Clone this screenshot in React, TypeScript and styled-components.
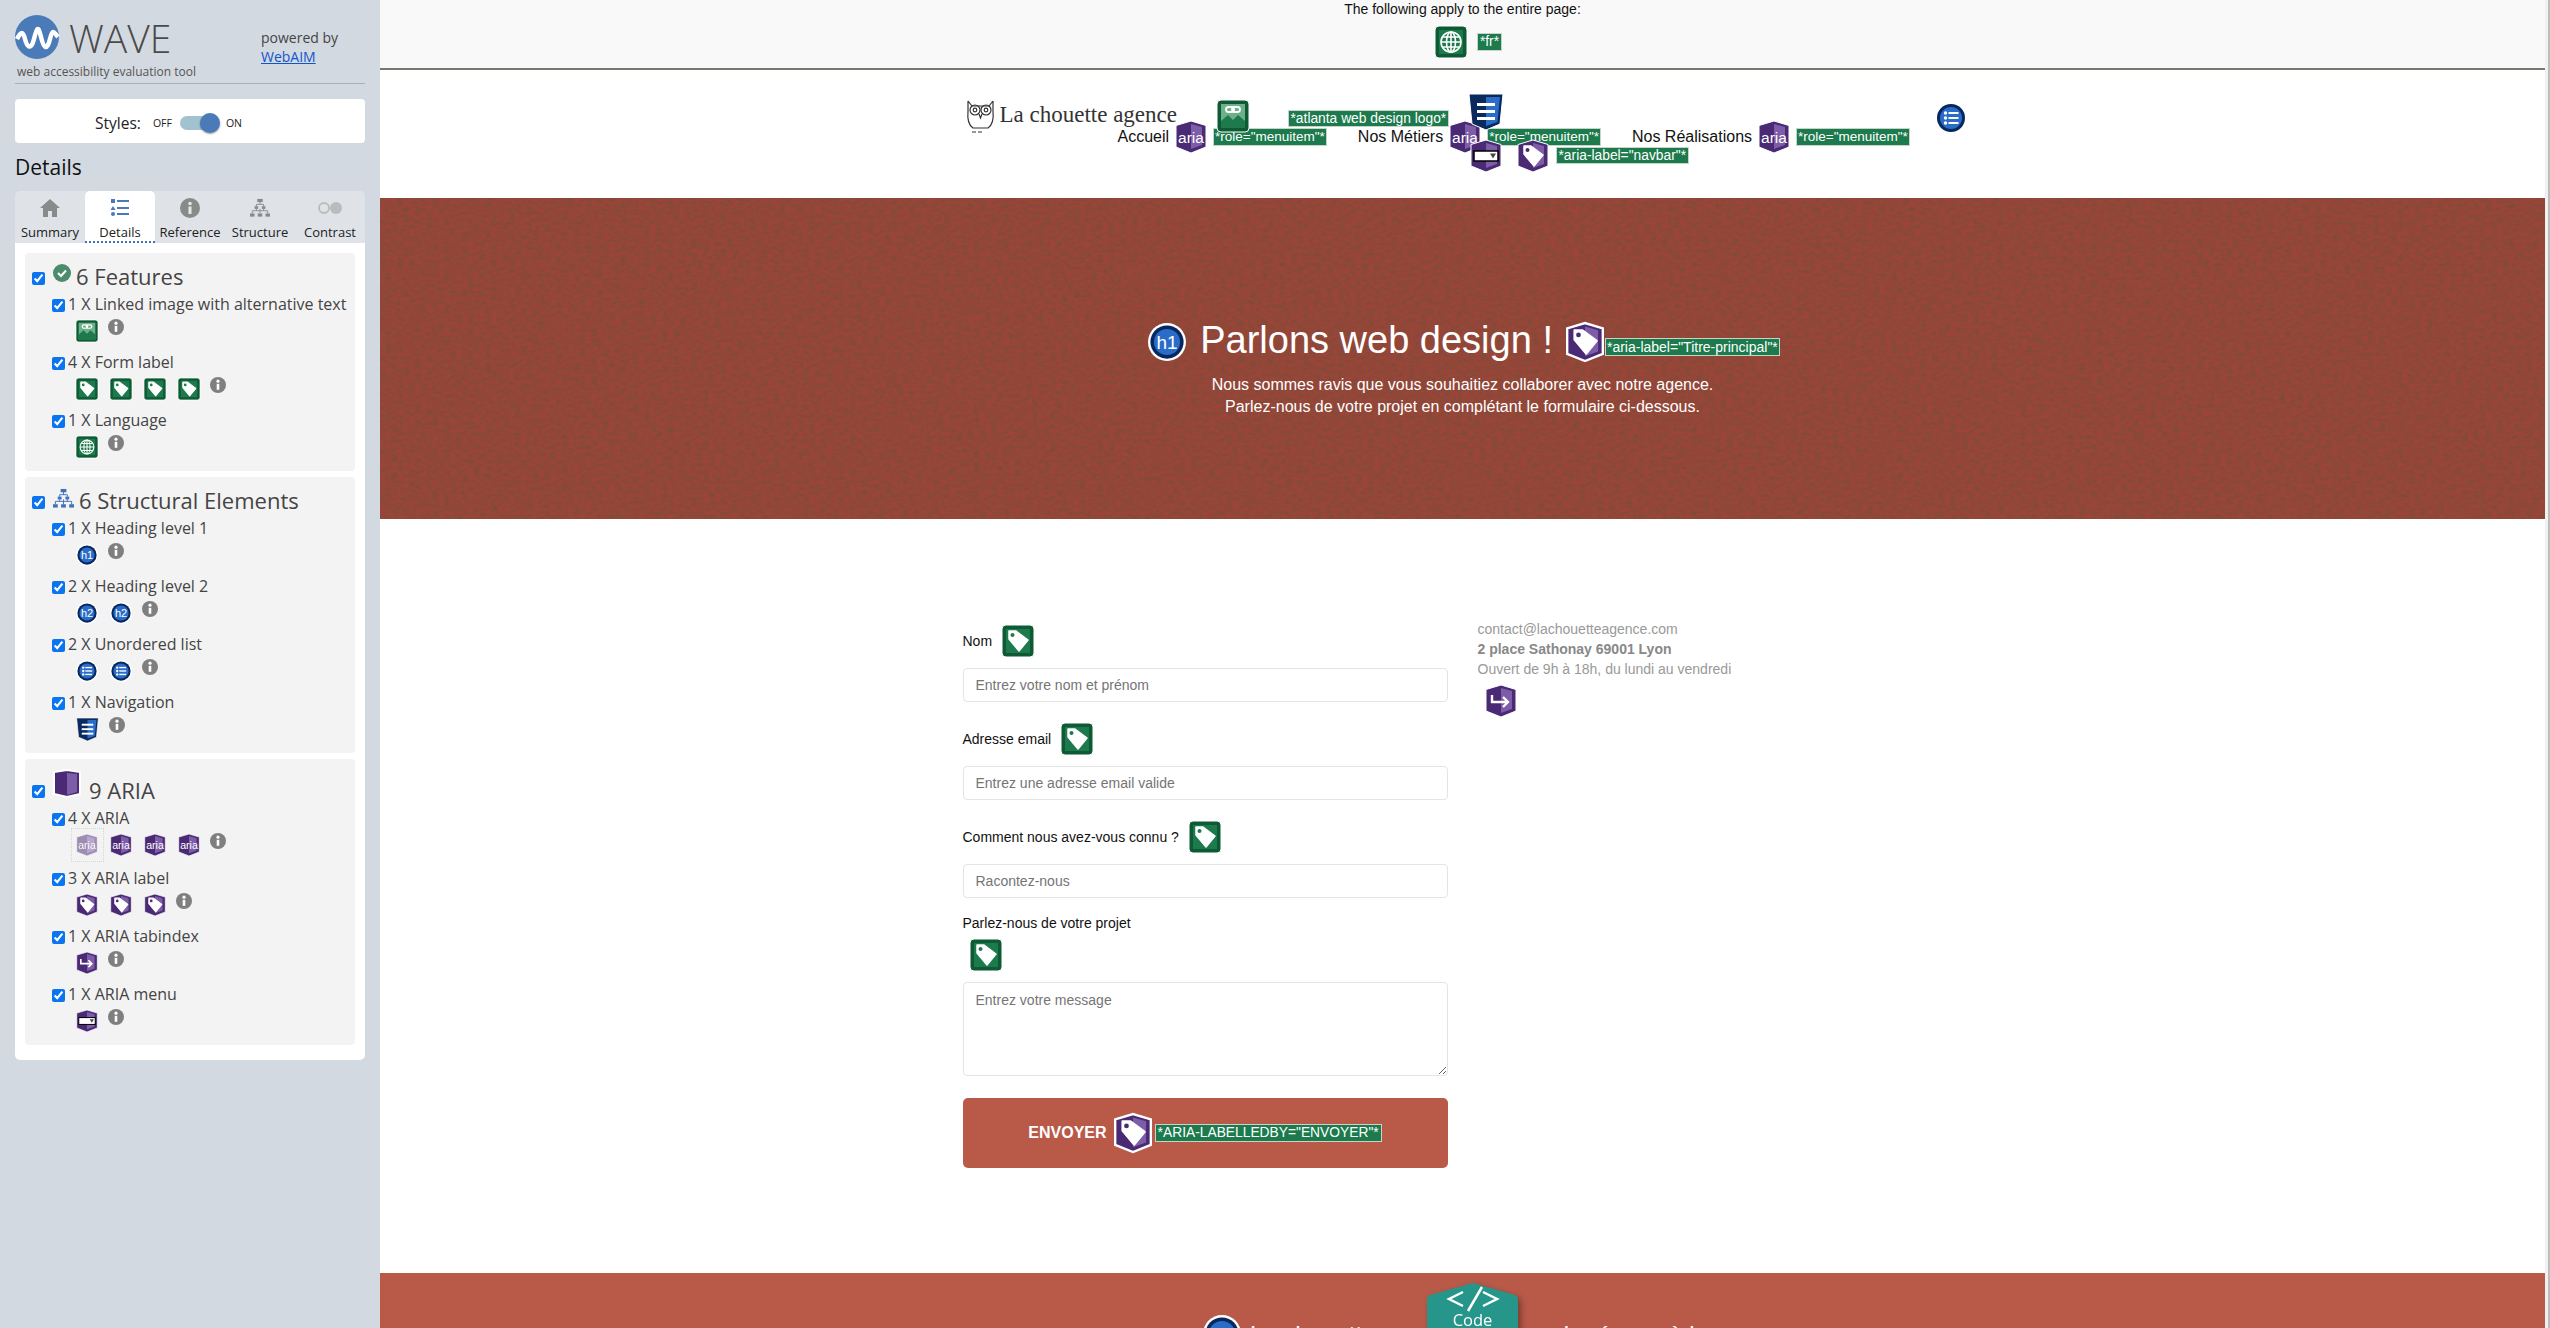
import { ReactNode } from 'react';
import styled, { createGlobalStyle } from 'styled-components';

const GlobalStyle = createGlobalStyle`
  html, body {
    margin: 0;
    height: 100%;
    overflow: hidden;
    background: #fff;
  }
  * {
    box-sizing: border-box;
  }
`;

const Page = styled.div`
  display: flex;
  height: 100vh;
  overflow: hidden;
  font-family: 'Liberation Sans', Arial, sans-serif;
`;

/* ---------- sidebar ---------- */

const Sidebar = styled.aside`
  flex: 0 0 380px;
  padding: 0 15px;
  background: #d3d9e0;
  font-family: 'Open Sans', sans-serif;
`;

const Brand = styled.header`
  height: 84px;
  padding-top: 15px;
  border-bottom: 1px solid #a9afb4;
`;

const BrandRow = styled.div`
  display: flex;
  height: 49px;
`;

const WaveWord = styled.div`
  margin-left: 10px;
  font-size: 39px;
  font-weight: 300;
  line-height: 45px;
  color: #4a4a4a;
`;

const Powered = styled.div`
  margin-left: auto;
  width: 104px;
  padding-top: 13px;
  font-size: 14px;
  line-height: 19px;
  color: #444;

  a {
    color: #1155cc;
    display: block;
  }
`;

const Tagline = styled.div`
  padding-left: 2px;
  font-size: 12px;
  line-height: 15px;
  color: #555;
`;

const StylesCard = styled.div`
  display: flex;
  align-items: center;
  height: 44px;
  margin-top: 15px;
  padding: 3px 0 0 80px;
  background: #fff;
  border-radius: 4px;
  color: #222;
`;

const StylesLabel = styled.span`
  font-size: 15.5px;
  margin-right: 12px;
`;

const SwitchWord = styled.span`
  font-size: 10.5px;
`;

const SwitchTrack = styled.span`
  position: relative;
  width: 38px;
  height: 14px;
  margin: 0 8px 0 8px;
  border-radius: 7px;
  background: #a0c3cf;
`;

const SwitchKnob = styled.span`
  position: absolute;
  right: -2px;
  top: -3px;
  width: 20px;
  height: 20px;
  border-radius: 50%;
  background: #4a7ab8;
  box-shadow: 0 1px 2px rgba(0, 0, 0, 0.4);
`;

const DetailsHeading = styled.h2`
  margin: 12px 0 12px 0;
  font-size: 21px;
  font-weight: 400;
  line-height: 24px;
  color: #111;
`;

const TabBar = styled.nav`
  display: grid;
  grid-template-columns: repeat(5, 70px);
  height: 52px;
  background: #dfe3e8;
  border-radius: 5px 5px 0 0;
`;

const Tab = styled.div<{ $active?: boolean }>`
  display: flex;
  flex-direction: column;
  align-items: center;
  padding-top: 7px;
  font-size: 13px;
  line-height: 16px;
  color: #222;
  white-space: nowrap;
  background: ${({ $active }) => ($active ? '#fff' : 'transparent')};
  border-radius: 5px 5px 0 0;
  border-bottom: ${({ $active }) => ($active ? '2px dotted #3f72b8' : 'none')};

  svg {
    margin-bottom: 6px;
  }
`;

const Panel = styled.div`
  display: flex;
  flex-direction: column;
  gap: 6px;
  padding: 10px 10px 15px;
  background: #fff;
  border-radius: 0 0 5px 5px;
`;

const Section = styled.section`
  padding: 11px 7px 5px;
  background: #f3f3f3;
  border-radius: 4px;
`;

const SectionTitle = styled.div<{ $tall?: boolean }>`
  display: flex;
  height: ${({ $tall }) => ($tall ? 32 : 24)}px;
  margin-bottom: 4px;
  font-size: 22px;
  line-height: 24px;
  color: #444;
  white-space: nowrap;

  input {
    margin: ${({ $tall }) => ($tall ? '15px' : '8px')} 8px 0 0;
  }

  span {
    align-self: flex-end;
    margin-left: ${({ $tall }) => ($tall ? 8 : 5)}px;
  }
`;

const Item = styled.div<{ $wide?: boolean }>`
  height: ${({ $wide }) => ($wide ? 60 : 58)}px;
  padding-left: 20px;
`;

const ItemLine = styled.div`
  display: flex;
  align-items: center;
  height: 24px;
  margin-bottom: 4px;
  font-size: 16px;
  color: #444;
  white-space: nowrap;

  input {
    margin: 3px 3px 0 0;
  }
`;

const IconRow = styled.div`
  display: flex;
  gap: 12px;
  padding-left: 24px;
`;

const Dotted = styled.span`
  display: flex;
  margin: -6px -6px -6px -5px;
  padding: 5px 5px 5px 4px;
  border: 1px dotted #bbb;
  opacity: 0.5;
`;

const Check = styled.input.attrs({ type: 'checkbox', defaultChecked: true })`
  flex: none;
  width: 13px;
  height: 13px;
  accent-color: #0b75f0;
`;

const IconSvg = styled.svg<{ $size: number }>`
  display: block;
  flex: none;
  width: ${({ $size }) => $size}px;
  height: ${({ $size }) => $size}px;
  overflow: visible;
`;

const InfoMark = styled(IconSvg)`
  margin: -1px 0 0 -2px;
`;

const ContrastMark = styled(IconSvg)`
  width: 26px;
`;

/* ---------- wave icons ---------- */

type IconProps = { size?: number };

const TagShape = ({ hole }: { hole: string }) => (
  <>
    <path d="M7 6h7l12 9-9 11L7 14z" fill="#fff" stroke="#fff" strokeWidth="1.5" strokeLinejoin="round" />
    <circle cx="10.5" cy="10" r="2" fill={hole} />
  </>
);

const GreenBox = ({ size = 32, children }: IconProps & { children: ReactNode }) => (
  <IconSvg $size={size} viewBox="0 0 32 32">
    <rect x="0" y="0" width="32" height="32" rx="4" fill="#0d5a34" stroke="#fff" strokeWidth="1" />
    <rect x="4" y="4" width="24" height="24" fill="#1c7a4c" />
    {children}
  </IconSvg>
);

const GreenTag = ({ size }: IconProps) => (
  <GreenBox size={size}>
    <TagShape hole="#1c7a4c" />
  </GreenBox>
);

const GreenGlobe = ({ size }: IconProps) => (
  <GreenBox size={size}>
    <g fill="none" stroke="#fff" strokeWidth="1.6">
      <circle cx="16" cy="16" r="10" />
      <ellipse cx="16" cy="16" rx="4.5" ry="10" />
      <path d="M6 16h20M7.5 11h17M7.5 21h17M16 6v20" />
    </g>
  </GreenBox>
);

const GreenImage = ({ size }: IconProps) => (
  <GreenBox size={size}>
    <rect x="4" y="4" width="24" height="24" fill="#6fb08c" />
    <path d="M4 28V21l7-6 5 5 5-5 7 6v7z" fill="#1c7a4c" />
    <g fill="none" stroke="#fff" strokeWidth="1.8">
      <rect x="9" y="7" width="8" height="5" rx="2.5" />
      <rect x="15" y="7" width="8" height="5" rx="2.5" />
    </g>
  </GreenBox>
);

const PurpleShield = ({
  size = 32,
  ring = 1,
  children,
}: IconProps & { ring?: number; children?: ReactNode }) => (
  <IconSvg $size={size} viewBox="0 0 32 32">
    <path d="M1 4.5 16 0l15 4.5V26L16 32 1 26z" fill="#4a2a75" stroke="#fff" strokeWidth={ring} />
    <path d="M16 3l11 3v18l-11 4z" fill="#7d5ca8" />
    {children}
  </IconSvg>
);

const AriaIcon = ({ size }: IconProps) => (
  <PurpleShield size={size}>
    <text x="16" y="21.500" textAnchor="middle" fontFamily="Liberation Sans, sans-serif" fontSize="15.500" fill="#fff">
      aria
    </text>
  </PurpleShield>
);

const PurpleTag = ({ size, ring }: IconProps & { ring?: number }) => (
  <PurpleShield size={size} ring={ring}>
    <TagShape hole="#4a2a75" />
  </PurpleShield>
);

const PurpleTab = ({ size }: IconProps) => (
  <PurpleShield size={size}>
    <path d="M7 10v7h16M18 12l5 5-5 5" fill="none" stroke="#fff" strokeWidth="2.4" />
  </PurpleShield>
);

const PurpleMenu = ({ size }: IconProps) => (
  <PurpleShield size={size}>
    <rect x="4" y="11" width="24" height="10" fill="#fff" stroke="#000" strokeWidth="1.5" />
    <path d="M20 13.5h6l-3 5z" fill="#444" />
  </PurpleShield>
);

const BlueRound = ({ size = 32, children }: IconProps & { children: ReactNode }) => (
  <IconSvg $size={size} viewBox="0 0 32 32">
    <circle cx="16" cy="16" r="16" fill="#fff" />
    <circle cx="16" cy="16" r="14" fill="#06285f" />
    <circle cx="16" cy="16" r="11" fill="#2a6cc8" />
    {children}
  </IconSvg>
);

const HeadingIcon = ({ level, size }: IconProps & { level: string }) => (
  <BlueRound size={size}>
    <text x="16" y="21.500" textAnchor="middle" fontFamily="Liberation Sans, sans-serif" fontSize="16" fill="#fff">
      {level}
    </text>
  </BlueRound>
);

const ListIcon = ({ size }: IconProps) => (
  <BlueRound size={size}>
    <g fill="#fff">
      <circle cx="10.5" cy="11" r="1.7" />
      <circle cx="10.5" cy="16" r="1.7" />
      <circle cx="10.5" cy="21" r="1.7" />
      <rect x="13.5" y="10" width="10" height="2" />
      <rect x="13.5" y="15" width="10" height="2" />
      <rect x="13.5" y="20" width="10" height="2" />
    </g>
  </BlueRound>
);

const NavIcon = ({ size = 36 }: IconProps) => (
  <IconSvg $size={size} viewBox="0 0 36 36">
    <path d="M1 0h34l-3 30-14 6-14-6z" fill="#0a2a5e" stroke="#fff" strokeWidth="1" />
    <path d="M18 3h14l-2.600 25L18 32z" fill="#2a6cc8" />
    <g fill="#fff">
      <rect x="9" y="9" width="18" height="3" />
      <rect x="9" y="16" width="18" height="3" />
      <rect x="9" y="23" width="18" height="3" />
    </g>
  </IconSvg>
);

const InfoIcon = () => (
  <InfoMark $size={16} viewBox="0 0 16 16">
    <circle cx="8" cy="8" r="8" fill="#7f7f7f" />
    <circle cx="8" cy="4.200" r="1.600" fill="#fff" />
    <rect x="6.700" y="6.800" width="2.600" height="6" fill="#fff" />
  </InfoMark>
);

const CheckBadge = () => (
  <IconSvg $size={18} viewBox="0 0 18 18">
    <circle cx="9" cy="9" r="9" fill="#4c8c6c" />
    <path d="M5 9l3 3 5-5.500" fill="none" stroke="#fff" strokeWidth="2" />
  </IconSvg>
);

const StructureGlyph = ({ color, size }: { color: string; size: number }) => (
  <IconSvg $size={size} viewBox="0 0 22 20">
    <g fill={color}>
      <rect x="8" y="0" width="6" height="3.500" />
      <rect x="5" y="8" width="4" height="3" />
      <rect x="13" y="8" width="4" height="3" />
      <rect x="0" y="16" width="5" height="3.500" />
      <rect x="8.500" y="16" width="5" height="3.500" />
      <rect x="17" y="16" width="5" height="3.500" />
    </g>
    <path d="M11 3v3M7 8V6h8v2M2.500 16v-3h17v3M11 11v5M7 11v2M15 11v2" fill="none" stroke={color} strokeWidth="1" />
  </IconSvg>
);

const AriaCube = () => (
  <IconSvg $size={28} viewBox="0 0 28 28">
    <path d="M1 2 14 0l13 2v22l-13 3-13-3z" fill="#4a2a75" stroke="#fff" strokeWidth="2" />
    <path d="M14 3l10 1v18l-10 3z" fill="#7d5ca8" />
  </IconSvg>
);

const HomeGlyph = () => (
  <IconSvg $size={20} viewBox="0 0 20 20">
    <path d="M10 1 0 10h3v9h5v-6h4v6h5v-9h3z" fill="#8a8a8a" />
  </IconSvg>
);

const DetailsGlyph = () => (
  <IconSvg $size={20} viewBox="0 0 20 20">
    <g fill="#4a78b8">
      <rect x="1" y="1" width="4" height="4" />
      <path d="M3 8l2.500 4h-5z" />
      <circle cx="3" cy="16" r="2" />
      <rect x="7" y="2" width="12" height="2" />
      <rect x="7" y="9" width="12" height="2" />
      <rect x="7" y="15" width="12" height="2" />
    </g>
  </IconSvg>
);

const ReferenceGlyph = () => (
  <IconSvg $size={20} viewBox="0 0 20 20">
    <circle cx="10" cy="10" r="10" fill="#8a8a8a" />
    <circle cx="10" cy="5.500" r="1.800" fill="#e4e7ea" />
    <rect x="8.500" y="8.500" width="3" height="7.500" fill="#e4e7ea" />
  </IconSvg>
);

const ContrastGlyph = () => (
  <ContrastMark $size={20} viewBox="0 0 26 20">
    <circle cx="7" cy="10" r="5" fill="none" stroke="#bbb" strokeWidth="1.800" />
    <circle cx="19" cy="10" r="6" fill="#bbb" />
  </ContrastMark>
);

const WaveLogo = () => (
  <IconSvg $size={44} viewBox="0 0 44 44">
    <circle cx="22" cy="22" r="22" fill="#4a7ab8" />
    <path d="M2 24c4-8 6-8 8 0s6 12 9 0 4-14 7-2 6 14 9 2 4-6 8-2" fill="none" stroke="#fff" strokeWidth="4.500" />
  </IconSvg>
);

const OwlLogo = () => (
  <IconSvg $size={33} viewBox="0 0 33 33">
    <g fill="none" stroke="#333" strokeWidth="1.200">
      <path d="M4 1l4 5h17l4-5M4 1v10M29 1v10M4 11c-1 10 2 15 5 17h15c3-2 6-7 5-17" />
      <circle cx="11" cy="10" r="5" />
      <circle cx="22" cy="10" r="5" />
      <circle cx="11" cy="10" r="1.800" />
      <circle cx="22" cy="10" r="1.800" />
      <path d="M15 14l1.500 4 1.500-4M8 32h4M14 32h4" />
    </g>
  </IconSvg>
);

/* ---------- main page ---------- */

const Main = styled.main`
  position: relative;
  flex: 1;
  min-width: 0;
  height: 100vh;
  overflow: hidden;
`;

const ScrollTrack = styled.div`
  flex: 0 0 5px;
  background: #f1f1f1;
  border-right: 2px solid #bdbdbd;
`;

const PageBanner = styled.div`
  display: flex;
  flex-direction: column;
  align-items: center;
  height: 70px;
  padding-top: 1px;
  background: #f9f9f9;
  border-bottom: 2px solid #727a6e;
  font-size: 14px;
  line-height: 16px;
  color: #111;
`;

const BannerIcons = styled.div`
  display: flex;
  align-items: center;
  gap: 10px;
  margin: 9px 0 0 12px;
`;

const Note = styled.span`
  flex: none;
  height: 18px;
  padding: 0 2px;
  background: #1c7a4c;
  border: 1px solid #c7d4cb;
  color: #fff;
  font-family: 'Liberation Sans', sans-serif;
  font-size: 13.8px;
  font-weight: 400;
  line-height: 16px;
  white-space: nowrap;
`;

const MenuNote = styled(Note)`
  padding: 0 1px;
  font-size: 13.5px;
`;

const NavBar = styled.div`
  position: relative;
  display: flex;
  width: 1000px;
  height: 128px;
  margin: 0 auto;
  padding: 30px 0 0 1px;
`;

const Logo = styled.a`
  display: flex;
  flex: 0 0 154px;
  width: 154px;
  min-width: 0;
  gap: 3px;
  height: 33px;
  color: #333;
  font-family: 'Liberation Serif', serif;
  font-size: 23px;
  line-height: 30px;
  white-space: nowrap;
`;

const Menu = styled.ul`
  display: flex;
  flex: none;
  gap: 31px;
  height: 32px;
  margin: 21px 0 0;
  padding: 0;
  list-style: none;
`;

const MenuItem = styled.li`
  display: flex;
  flex: none;
  align-items: center;
  gap: 6px;
  font-size: 16px;
  color: #111;
  white-space: nowrap;
`;

const Floating = styled.span<{ $left: number; $top: number }>`
  position: absolute;
  left: ${({ $left }) => $left}px;
  top: ${({ $top }) => $top}px;
`;

const Hero = styled.section`
  position: relative;
  display: flex;
  flex-direction: column;
  align-items: center;
  height: 321px;
  padding-top: 125px;
  background: #9a4538;
  color: #fff;
  overflow: hidden;
`;

const HeroGrain = styled.svg`
  position: absolute;
  inset: 0;
  width: 100%;
  height: 100%;
`;

const HeroTitle = styled.div`
  position: relative;
  display: flex;
  align-items: flex-start;
  height: 38px;
  margin-left: 3px;
`;

const HeroHeading = styled.h1`
  margin: -2px 13px 0 14px;
  font-size: 38px;
  font-weight: 400;
  line-height: 38px;
`;

const HeroNote = styled(Note)`
  margin: 15px 0 0 1px;
  padding: 0 1px;
  font-size: 14px;
`;

const HeroText = styled.p`
  position: relative;
  margin: 13px 0 0;
  font-size: 16px;
  line-height: 22px;
  text-align: center;
`;

const ContactArea = styled.section`
  display: flex;
  width: 1000px;
  margin: 0 auto;
  padding-top: 100px;
`;

const ContactForm = styled.form`
  flex: 0 0 486px;
  padding-top: 6px;
`;

const LabelRow = styled.label<{ $stacked?: boolean }>`
  display: flex;
  flex-direction: ${({ $stacked }) => ($stacked ? 'column' : 'row')};
  align-items: ${({ $stacked }) => ($stacked ? 'flex-start' : 'center')};
  gap: ${({ $stacked }) => ($stacked ? 8 : 10)}px;
  margin: ${({ $stacked }) => ($stacked ? '-4px' : '0')} 0 11px;
  font-size: 14px;
  line-height: 16px;
  color: #111;

  svg {
    margin-left: ${({ $stacked }) => ($stacked ? 7 : 0)}px;
  }
`;

const TextField = styled.input`
  display: block;
  width: 485px;
  height: 34px;
  margin: 0 0 21px;
  padding: 0 12px;
  border: 1px solid #e4e4e4;
  border-radius: 4px;
  font-family: 'Liberation Sans', sans-serif;
  font-size: 14px;
  outline: none;

  ::placeholder {
    color: #a9a9a9;
  }
`;

const MessageField = styled.textarea`
  display: block;
  width: 485px;
  height: 94px;
  margin: 0 0 22px;
  padding: 8px 12px;
  border: 1px solid #e4e4e4;
  border-radius: 4px;
  font-family: 'Liberation Sans', sans-serif;
  font-size: 14px;
  line-height: 18px;
  outline: none;

  ::placeholder {
    color: #a9a9a9;
  }
`;

const SendButton = styled.button`
  display: flex;
  align-items: center;
  justify-content: center;
  width: 485px;
  height: 70px;
  border: none;
  border-radius: 5px;
  background: #b95a49;
  color: #fff;
  font-family: 'Liberation Sans', sans-serif;
  font-size: 16px;
  font-weight: 700;

  svg {
    margin: 0 3px 0 7px;
  }
`;

const ContactInfo = styled.address`
  margin-left: 29px;
  font-size: 14px;
  font-style: normal;
  line-height: 20px;
  color: #999;

  strong {
    display: block;
    color: #888;
  }

  svg {
    margin: 6px 0 0 7px;
  }
`;

const Footer = styled.footer`
  position: absolute;
  left: 0;
  right: 0;
  top: 1273px;
  height: 120px;
  padding: 42px 0 0 823px;
  display: flex;
  gap: 9px;
  background: #b95a49;
  color: #fff;
  font-size: 24px;
  line-height: 40px;
  white-space: nowrap;
`;

const FooterTail = styled.span`
  margin-left: 103px;
`;

const CodeBadge = styled.div`
  position: absolute;
  left: 1047px;
  top: 1283px;
  width: 91px;
  height: 60px;
  color: #fff;
  text-align: center;
  font-family: 'Open Sans', sans-serif;
  font-size: 16.5px;
  line-height: 20px;
  filter: drop-shadow(3px 3px 3px rgba(0, 0, 0, 0.35));

  svg {
    position: absolute;
    left: 0;
    top: 0;
  }

  span {
    position: absolute;
    left: 0;
    right: 0;
    top: 27px;
  }
`;

type SidebarItem = { label: string; icons: ReactNode[]; wide?: boolean };

const featureItems: SidebarItem[] = [
  { label: '1 X Linked image with alternative text', icons: [<GreenImage size={22} />] },
  { label: '4 X Form label', icons: [1, 2, 3, 4].map(() => <GreenTag size={22} />) },
  { label: '1 X Language', icons: [<GreenGlobe size={22} />] },
];

const structureItems: SidebarItem[] = [
  { label: '1 X Heading level 1', icons: [<HeadingIcon level="h1" size={22} />] },
  { label: '2 X Heading level 2', icons: [1, 2].map(() => <HeadingIcon level="h2" size={22} />) },
  { label: '2 X Unordered list', icons: [1, 2].map(() => <ListIcon size={22} />) },
  { label: '1 X Navigation', icons: [<NavIcon size={23} />] },
];

const ariaItems: SidebarItem[] = [
  {
    label: '4 X ARIA',
    wide: true,
    icons: [
      <Dotted>
        <AriaIcon size={22} />
      </Dotted>,
      <AriaIcon size={22} />,
      <AriaIcon size={22} />,
      <AriaIcon size={22} />,
    ],
  },
  { label: '3 X ARIA label', icons: [1, 2, 3].map(() => <PurpleTag size={22} />) },
  { label: '1 X ARIA tabindex', icons: [<PurpleTab size={22} />] },
  { label: '1 X ARIA menu', icons: [<PurpleMenu size={22} />] },
];

const Items = ({ items }: { items: SidebarItem[] }) => (
  <>
    {items.map((item) => (
      <Item key={item.label} $wide={item.wide}>
        <ItemLine>
          <Check />
          {item.label}
        </ItemLine>
        <IconRow>
          {item.icons.map((icon, i) => (
            <span key={i}>{icon}</span>
          ))}
          <InfoIcon />
        </IconRow>
      </Item>
    ))}
  </>
);

const menuLinks = ['Accueil', 'Nos Métiers', 'Nos Réalisations'];

export default function App() {
  return (
    <Page>
      <GlobalStyle />
      <Sidebar>
        <Brand>
          <BrandRow>
            <WaveLogo />
            <WaveWord>WAVE</WaveWord>
            <Powered>
              powered by
              <a href="#webaim">WebAIM</a>
            </Powered>
          </BrandRow>
          <Tagline>web accessibility evaluation tool</Tagline>
        </Brand>
        <StylesCard>
          <StylesLabel>Styles:</StylesLabel>
          <SwitchWord>OFF</SwitchWord>
          <SwitchTrack>
            <SwitchKnob />
          </SwitchTrack>
          <SwitchWord>ON</SwitchWord>
        </StylesCard>
        <DetailsHeading>Details</DetailsHeading>
        <TabBar>
          <Tab>
            <HomeGlyph />
            Summary
          </Tab>
          <Tab $active>
            <DetailsGlyph />
            Details
          </Tab>
          <Tab>
            <ReferenceGlyph />
            Reference
          </Tab>
          <Tab>
            <StructureGlyph color="#8a8a8a" size={20} />
            Structure
          </Tab>
          <Tab>
            <ContrastGlyph />
            Contrast
          </Tab>
        </TabBar>
        <Panel>
          <Section>
            <SectionTitle>
              <Check />
              <CheckBadge />
              <span>6 Features</span>
            </SectionTitle>
            <Items items={featureItems} />
          </Section>
          <Section>
            <SectionTitle>
              <Check />
              <StructureGlyph color="#3f72b8" size={21} />
              <span>6 Structural Elements</span>
            </SectionTitle>
            <Items items={structureItems} />
          </Section>
          <Section>
            <SectionTitle $tall>
              <Check />
              <AriaCube />
              <span>9 ARIA</span>
            </SectionTitle>
            <Items items={ariaItems} />
          </Section>
        </Panel>
      </Sidebar>

      <Main>
        <PageBanner>
          The following apply to the entire page:
          <BannerIcons>
            <GreenGlobe />
            <Note>*fr*</Note>
          </BannerIcons>
        </PageBanner>

        <NavBar>
          <Logo>
            <OwlLogo />
            La chouette agence
          </Logo>
          <Menu>
            {menuLinks.map((link) => (
              <MenuItem key={link}>
                {link}
                <AriaIcon />
                <MenuNote>*role="menuitem"*</MenuNote>
              </MenuItem>
            ))}
          </Menu>
          <Floating $left={254} $top={30}>
            <GreenImage />
          </Floating>
          <Floating $left={325} $top={39}>
            <Note>*atlanta web design logo*</Note>
          </Floating>
          <Floating $left={505} $top={24}>
            <NavIcon />
          </Floating>
          <Floating $left={507} $top={70}>
            <PurpleMenu />
          </Floating>
          <Floating $left={554} $top={70}>
            <PurpleTag />
          </Floating>
          <Floating $left={593} $top={76}>
            <Note>*aria-label="navbar"*</Note>
          </Floating>
          <Floating $left={972} $top={32}>
            <ListIcon />
          </Floating>
        </NavBar>

        <Hero>
          <HeroGrain aria-hidden="true">
            <filter id="grain" x="0" y="0" width="100%" height="100%">
              <feTurbulence type="fractalNoise" baseFrequency="0.17 0.29" numOctaves="4" seed="4" />
              <feColorMatrix values="0 0 0 0 0.2  0 0 0 0 0.07  0 0 0 0 0.04  1.8 0 0 0 -0.62" />
            </filter>
            <rect width="100%" height="100%" filter="url(#grain)" />
          </HeroGrain>
          <HeroTitle>
            <HeadingIcon level="h1" size={38} />
            <HeroHeading>Parlons web design !</HeroHeading>
            <PurpleTag size={38} ring={2} />
            <HeroNote>*aria-label="Titre-principal"*</HeroNote>
          </HeroTitle>
          <HeroText>
            Nous sommes ravis que vous souhaitiez collaborer avec notre agence.
            <br />
            Parlez-nous de votre projet en complétant le formulaire ci-dessous.
          </HeroText>
        </Hero>

        <ContactArea>
          <ContactForm>
            <LabelRow>
              Nom
              <GreenTag />
            </LabelRow>
            <TextField placeholder="Entrez votre nom et prénom" />
            <LabelRow>
              Adresse email
              <GreenTag />
            </LabelRow>
            <TextField placeholder="Entrez une adresse email valide" />
            <LabelRow>
              Comment nous avez-vous connu ?
              <GreenTag />
            </LabelRow>
            <TextField placeholder="Racontez-nous" />
            <LabelRow $stacked>
              Parlez-nous de votre projet
              <GreenTag />
            </LabelRow>
            <MessageField placeholder="Entrez votre message" />
            <SendButton type="button">
              ENVOYER
              <PurpleTag size={38} ring={2} />
              <Note>*ARIA-LABELLEDBY="ENVOYER"*</Note>
            </SendButton>
          </ContactForm>
          <ContactInfo>
            contact@lachouetteagence.com
            <strong>2 place Sathonay 69001 Lyon</strong>
            Ouvert de 9h à 18h, du lundi au vendredi
            <PurpleTab />
          </ContactInfo>
        </ContactArea>

        <Footer>
          <HeadingIcon level="h2" size={38} />
          <span>
            La chouette agence
            <FooterTail>le réseau à la</FooterTail>
          </span>
        </Footer>
        <CodeBadge>
          <svg width="91" height="60" viewBox="0 0 91 60">
            <path d="M46 0 88 12q3 1 3 6v42H0V18q0-5 3-6z" fill="#259689" />
            <path d="M36 9 22 16l14 7M56 9l14 7-14 7M55 4 41 28" fill="none" stroke="#fff" strokeWidth="2.500" />
          </svg>
          <span>Code</span>
        </CodeBadge>
      </Main>
      <ScrollTrack />
    </Page>
  );
}
